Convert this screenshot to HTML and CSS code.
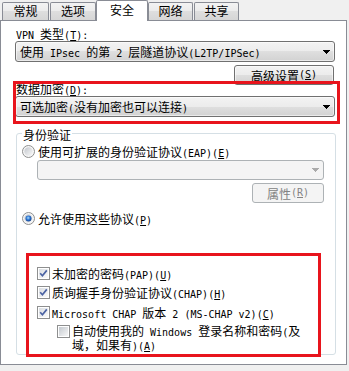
FILE: index.html
```html
<!DOCTYPE html>
<html lang="zh-CN">
<head>
<meta charset="utf-8">
<title>VPN 属性 - 安全</title>
<link rel="stylesheet" href="styles.css">
</head>
<body>
<div class="tabs">
  <div class="tab t1">常规</div>
  <div class="tab t2">选项</div>
  <div class="tab sel">安全</div>
  <div class="tab t4">网络</div>
  <div class="tab t5">共享</div>
</div>
<div class="panel">
  <div class="lbl"><span class="m">VPN </span>类型<span class="m">(<u>T</u>):</span></div>
  <div class="combo">
    <span>使用<span class="m"> IPsec </span>的第<span class="m"> 2 </span>层隧道协议<span class="m">(L2TP/IPSec)</span></span>
    <svg class="arr" width="7" height="4" viewBox="0 0 7 4"><path d="M0 0H7V1H6V2H5V3H4V4H3V3H2V2H1V1H0Z" fill="#000"/></svg>
  </div>
  <div class="btnrow"><div class="btn adv">高级设置<span class="m">(<u>S</u>)</span></div></div>
  <div class="lbl lbl-enc">数据加密<span class="m">(<u>D</u>):</span></div>
  <div class="combo">
    <span>可选加密<span class="m">(</span>没有加密也可以连接<span class="m">)</span></span>
    <svg class="arr" width="7" height="4" viewBox="0 0 7 4"><path d="M0 0H7V1H6V2H5V3H4V4H3V3H2V2H1V1H0Z" fill="#000"/></svg>
  </div>
  <div class="group">
    <div class="gtitle">身份验证</div>
    <div class="opt r1">
      <svg class="rad" width="13" height="13" viewBox="0 0 13 13">
        <defs>
          <linearGradient id="rg" x1="0" y1="0" x2="1" y2="1"><stop offset="0" stop-color="#c3c7cd"/><stop offset="1" stop-color="#f9f9f9"/></linearGradient>
          <radialGradient id="rb" cx="0.45" cy="0.4" r="0.6"><stop offset="0" stop-color="#a9dcfb"/><stop offset="0.55" stop-color="#2a72d0"/><stop offset="1" stop-color="#11418f"/></radialGradient>
          <linearGradient id="cg" x1="0" y1="0" x2="1" y2="1"><stop offset="0" stop-color="#c4c9cf"/><stop offset="1" stop-color="#f7f7f7"/></linearGradient>
          <linearGradient id="cgc" x1="0" y1="0" x2="1" y2="1"><stop offset="0" stop-color="#d9dde2"/><stop offset="1" stop-color="#fbfbfb"/></linearGradient>
        </defs>
        <circle cx="6.5" cy="6.5" r="6" fill="#f6f6f6" stroke="#8e8f8f"/>
        <circle cx="6.5" cy="6.5" r="4.2" fill="url(#rg)"/>
      </svg>
      <span class="txt">使用可扩展的身份验证协议<span class="m">(EAP)(<u>E</u>)</span></span>
    </div>
    <div class="combo dis eap">
      <svg class="arr" width="7" height="4" viewBox="0 0 7 4"><path d="M0 0H7V1H6V2H5V3H4V4H3V3H2V2H1V1H0Z" fill="#aaaaaa"/></svg>
    </div>
    <div class="btnrow2"><div class="btn dbtn">属性<span class="m">(<u>R</u>)</span></div></div>
    <div class="opt r2">
      <svg class="rad" width="13" height="13" viewBox="0 0 13 13">
        <circle cx="6.5" cy="6.5" r="6" fill="#f6f6f6" stroke="#8e8f8f"/>
        <circle cx="6.5" cy="6.5" r="4.2" fill="url(#rg)"/>
        <circle cx="6.5" cy="6.5" r="3" fill="url(#rb)"/>
      </svg>
      <span class="txt">允许使用这些协议<span class="m">(<u>P</u>)</span></span>
    </div>
    <div class="checks">
      <div class="opt cb c1">
        <svg width="13" height="13" viewBox="0 0 13 13"><rect x="0.5" y="0.5" width="12" height="12" fill="#fff" stroke="#8e8f8f"/><rect x="2" y="2" width="9" height="9" fill="url(#cgc)"/><path d="M3.2 6.3L5.4 8.7L9.8 3.4" fill="none" stroke="#4a62a3" stroke-width="1.7"/></svg>
        <span class="txt">未加密的密码<span class="m">(PAP)(<u>U</u>)</span></span>
      </div>
      <div class="opt cb c2">
        <svg width="13" height="13" viewBox="0 0 13 13"><rect x="0.5" y="0.5" width="12" height="12" fill="#fff" stroke="#8e8f8f"/><rect x="2" y="2" width="9" height="9" fill="url(#cgc)"/><path d="M3.2 6.3L5.4 8.7L9.8 3.4" fill="none" stroke="#4a62a3" stroke-width="1.7"/></svg>
        <span class="txt">质询握手身份验证协议<span class="m">(CHAP)(<u>H</u>)</span></span>
      </div>
      <div class="opt cb c3">
        <svg width="13" height="13" viewBox="0 0 13 13"><rect x="0.5" y="0.5" width="12" height="12" fill="#fff" stroke="#8e8f8f"/><rect x="2" y="2" width="9" height="9" fill="url(#cgc)"/><path d="M3.2 6.3L5.4 8.7L9.8 3.4" fill="none" stroke="#4a62a3" stroke-width="1.7"/></svg>
        <span class="txt"><span class="m">Microsoft CHAP </span>版本<span class="m"> 2 (MS-CHAP v2)(<u>C</u>)</span></span>
      </div>
      <div class="opt sub">
        <svg width="13" height="13" viewBox="0 0 13 13"><rect x="0.5" y="0.5" width="12" height="12" fill="#fff" stroke="#8e8f8f"/><rect x="2" y="2" width="9" height="9" fill="url(#cg)"/></svg>
        <span class="txt">自动使用我的<span class="m"> Windows </span>登录名称和密码<span class="m">(</span>及<br>域，如果有<span class="m">)(<u>A</u>)</span></span>
      </div>
    </div>
  </div>
</div>
<div class="red red1"></div>
<div class="red red2"></div>
</body>
</html>
```

FILE: styles.css
```css
html, body {
  margin: 0;
  padding: 0;
}
body {
  width: 349px;
  height: 371px;
  overflow: hidden;
  background: #f0f0f0;
  color: #000;
  font-family: "Noto Sans CJK SC", "Noto Sans CJK JP", sans-serif;
  font-size: 12px;
  line-height: 13px;
}
.m {
  font-family: "DejaVu Sans Mono", "Liberation Mono", monospace;
  font-size: 10px;
  line-height: 10px;
  white-space: pre;
}
u {
  text-decoration: underline;
  text-underline-offset: 1px;
}

/* Tabs */
.tabs {
  display: flex;
  align-items: flex-end;
  height: 20px;
}
.tab {
  box-sizing: border-box;
  height: 18px;
  border: 1px solid #898c95;
  border-bottom: none;
  border-radius: 2px 2px 0 0;
  background: linear-gradient(#f3f3f3, #ebebeb 50%, #dedede 50%, #d6d6d6);
  text-align: center;
  padding-top: 1px;
}
.t1 { width: 47px; margin-left: 2px; margin-right: 1px; }
.t2 { width: 46px; }
.sel {
  width: 52px;
  height: 21px;
  margin-bottom: -1px;
  background: #fff;
  padding-top: 2px;
  position: relative;
  z-index: 1;
}
.t4 { width: 45px; margin-right: 1px; }
.t5 { width: 45px; }

/* Panel */
.panel {
  box-sizing: border-box;
  width: 347px;
  height: 345px;
  background: #fff;
  border: 1px solid #898c95;
  padding: 6px 0 0 14px;
}
.lbl {
  margin-left: 1px;
  height: 13px;
}
.lbl-enc {
  margin-top: -3px;
}
.combo {
  box-sizing: border-box;
  width: 320px;
  height: 21px;
  margin-top: 1px;
  border: 1px solid #707070;
  border-radius: 3px;
  background: linear-gradient(#f3f3f3, #ececec 50%, #dfdfdf 50%, #d2d2d2);
  box-shadow: inset 0 0 0 1px rgba(255, 255, 255, 0.55);
  display: flex;
  align-items: center;
  padding-left: 4px;
}
.arr {
  margin-left: auto;
  margin-right: 4px;
  flex: none;
}
.btnrow {
  width: 319px;
  display: flex;
  justify-content: flex-end;
  margin-top: 3px;
}
.btn {
  box-sizing: border-box;
  height: 20px;
  border: 1px solid #707070;
  border-radius: 3px;
  background: linear-gradient(#f3f3f3, #ececec 50%, #dfdfdf 50%, #d2d2d2);
  box-shadow: inset 0 0 0 1px rgba(255, 255, 255, 0.55);
  display: flex;
  align-items: center;
  justify-content: center;
}
.adv { width: 100px; }

/* Group */
.group {
  box-sizing: border-box;
  width: 320px;
  margin: 16px 0 0 1px;
  border: 1px solid #d5dfe5;
  border-radius: 3px;
  padding: 0 0 2px 5px;
}
.gtitle {
  width: fit-content;
  margin-top: -6px;
  padding: 0 1px;
  background: #fff;
  height: 13px;
}
.opt {
  display: flex;
  align-items: center;
  height: 13px;
}
.opt svg { flex: none; display: block; }
.rad + .txt { margin-left: 3px; }
.r1 { margin-top: 4px; }
.combo.dis {
  border-color: #adb2b5;
  background: #f4f4f4;
  box-shadow: none;
}
.eap {
  width: 287px;
  height: 20px;
  margin: 2px 0 0 15px;
}
.btnrow2 {
  width: 302px;
  display: flex;
  justify-content: flex-end;
  margin-top: 3px;
}
.dbtn {
  width: 72px;
  border-color: #adb2b5;
  background: #f4f4f4;
  box-shadow: none;
  color: #838383;
}
.r2 { margin-top: 9px; }
.checks { margin-top: 42px; }
.cb { padding-left: 15px; }
.cb .txt, .sub .txt { margin-left: 2px; }
.c2 { margin-top: 6px; }
.c3 { margin-top: 7px; }
.sub {
  margin-top: 5px;
  padding-left: 35px;
  height: auto;
  align-items: flex-start;
}
.sub svg { margin-top: 1px; }

/* Red annotation boxes drawn over the screenshot */
.red {
  position: absolute;
  box-sizing: border-box;
  border: 3px solid #e8141c;
}
.red1 { left: 13px; top: 81px; width: 327px; height: 43px; }
.red2 { left: 26px; top: 253px; width: 295px; height: 104px; }
```
